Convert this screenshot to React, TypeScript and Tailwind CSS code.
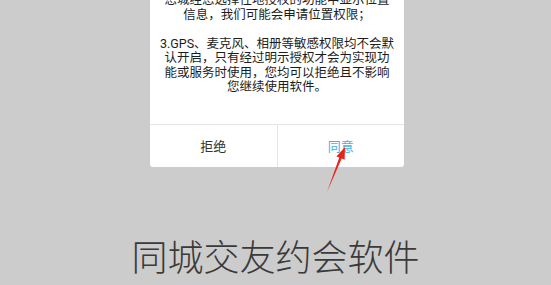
export default function App() {
  const lines = [
    '您城经您选择性地授权的功能中显示位置',
    '信息，我们可能会申请位置权限；',
    '\u00a0',
    '3.GPS、麦克风、相册等敏感权限均不会默',
    '认开启，只有经过明示授权才会为实现功',
    '能或服务时使用，您均可以拒绝且不影响',
    '您继续使用软件。',
  ];

  return (
    <div
      className="relative flex h-[285px] w-[551px] flex-col items-center overflow-hidden bg-[#cccccc]"
      style={{ fontFamily: 'Roboto, "Noto Sans CJK SC", sans-serif' }}
    >
      <div className="-mt-[7px] ml-[3px] w-[254px] rounded-b-[3px] bg-white">
        <div className="pb-[29px] text-center text-[12.5px] leading-[14.5px] text-[#1c1c1c]">
          {lines.map((line, i) => (
            <div key={i}>{line}</div>
          ))}
        </div>
        <div className="flex h-[43px] border-t border-[#e4e4e4] text-[13px]">
          <div className="flex flex-1 items-center justify-center pt-[2px] text-[#333333]">
            拒绝
          </div>
          <div className="flex flex-1 items-center justify-center border-l border-[#e4e4e4] pt-[2px] text-[#45b0e5]">
            同意
          </div>
        </div>
      </div>

      <div className="mt-[74px] text-[36px] font-light leading-[36px] text-[#3a3a3a]">
        同城交友约会软件
      </div>

      <svg
        className="pointer-events-none absolute left-0 top-0"
        width="551"
        height="285"
        viewBox="0 0 551 285"
      >
        <polygon
          points="327,192 339.3,157.6 336.4,156.4 345,147 344.6,159.8 341.7,158.6"
          fill="#e8231d"
        />
      </svg>
    </div>
  );
}
